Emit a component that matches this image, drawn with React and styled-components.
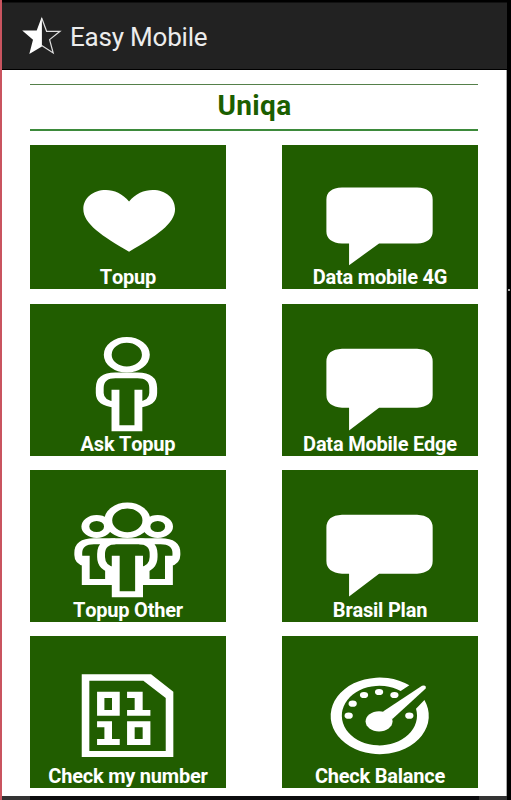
import styled, { createGlobalStyle } from 'styled-components'

const GlobalStyle = createGlobalStyle`
  * {
    box-sizing: border-box;
  }

  body {
    margin: 0;
    background: #000;
    font-family: Roboto, sans-serif;
  }
`

const Frame = styled.div`
  position: relative;
  display: flex;
  flex-direction: column;
  height: 800px;
  padding: 2px 4px 0 0;
  border-left: 2px solid #c9545f;
  background: #000;
  overflow: hidden;
`

const ActionBar = styled.header`
  display: flex;
  align-items: center;
  flex: none;
  height: 68px;
  padding-left: 19px;
  background: #222;
  border-top: 1px solid #111;
  border-bottom: 1px solid #000;
`

const StarIcon = styled.svg`
  width: 42px;
  height: 42px;
`

const AppName = styled.h1`
  margin: 2px 0 0 7px;
  color: #ececec;
  font-size: 26px;
  font-weight: 400;
  line-height: 32px;
  letter-spacing: -0.2px;
`

const Screen = styled.main`
  flex: none;
  height: 725.5px;
  padding: 14px 28px 0;
  background: #fff;
  border-right: 1px solid #aaa;
`

const Carrier = styled.h2`
  height: 47px;
  margin: 0 0 14px;
  padding-left: 1px;
  border-top: 1px solid #55804a;
  border-bottom: 2px solid #3d8a3b;
  color: #1b5e00;
  font-size: 28px;
  font-weight: 700;
  line-height: 41px;
  letter-spacing: 0.3px;
  text-align: center;
`

const Tiles = styled.div`
  display: grid;
  grid-template-columns: 196px 196px;
  grid-template-rows: 144.4px 152px 152px 152px;
  justify-content: space-between;
  row-gap: 14.3px;
`

const Tile = styled.button`
  display: grid;
  padding: 0;
  border: 0;
  background: #215d00;
  color: #fff;
  font-family: inherit;
  cursor: pointer;
`

/* Stretched with the tile, so the first row gets slightly flatter icons */
const TileIcon = styled.svg`
  grid-area: 1 / 1;
  width: 100%;
  height: 100%;
  min-height: 0;
`

const TileLabel = styled.span`
  grid-area: 1 / 1;
  align-self: end;
  font-size: 20px;
  font-weight: 700;
  font-kerning: none;
  line-height: 24px;
  letter-spacing: -0.22px;
  text-align: center;
`

const BottomBar = styled.footer`
  display: flex;
  justify-content: space-between;
  flex: 1;
  background: #0c0c0e;
`

const Corner = styled.div`
  width: 28px;
  background: #333;
`

const Speck = styled.i`
  position: absolute;
  top: 289px;
  right: 1px;
  width: 2px;
  height: 2px;
  background: #aaa;
`

const Heart = () => (
  <path
    fill="#fff"
    d="M74.3 59.5C69.5 51.5 63 47.5 57 47.5C47 47.5 40 56 40 67.5C40 83 54 96 74.3 112.3C94.6 96 108.8 83 108.8 67.5C108.8 56 102 47.5 92 47.5C85.6 47.5 79 51.5 74.3 59.5Z"
  />
)

const Bubble = () => (
  <path
    fill="#fff"
    d="M45 44.7H101.3Q113 45.5 113 57.5V91Q113 102.5 101.3 103.7H72.8L50.3 126.5V103.7H45Q33.3 102.5 33.3 91V57.5Q33.3 45.5 45 44.7Z"
  />
)

const Person = () => (
  <g fill="none" stroke="#fff" strokeWidth="5.9">
    <ellipse cx="72.6" cy="50.7" rx="14.3" ry="14.8" />
    <path d="M64.1 100.5Q52.3 99.5 52.3 89V84Q52.3 71.4 64 71.4H80.6Q92.4 71.4 92.4 84V89Q92.4 99.5 81.3 100.5" />
    <path d="M64.1 85.7V124.2H81.3V85.7" />
  </g>
)

const People = () => (
  <g fill="none" stroke="#fff" strokeWidth="5.9">
    <circle cx="50" cy="56.5" r="8.5" />
    <circle cx="95.8" cy="56.5" r="8.5" />
    <ellipse cx="73" cy="50.3" rx="14.3" ry="14.8" />
    <path d="M64.3 100.5Q53.3 99 53.3 87V84Q53.3 71.2 64.5 71.2H81.5Q92.7 71.2 92.7 84V87Q92.7 99 81.8 100.5" />
    <path d="M64.3 85.7V124.2H81.8V85.7" />
    <path d="M64 71.2H48Q36.2 71.2 36.2 83V85Q36.2 92 41.8 93.5M41.8 85.7V112H59.3V98" />
    <path d="M82 71.2H98Q109.8 71.2 109.8 83V85Q109.8 92 104.2 93.5M104.2 85.7V112H86.7V98" />
  </g>
)

const BinaryFile = () => (
  <g fill="#fff" fillRule="evenodd">
    <path d="M38.8 38.3H90.8L107.5 55.7V121H38.8ZM44.5 44.7V115H101.8V62L85 44.7Z" />
    <path d="M50.3 55.7H67.3V79.7H50.3ZM55.8 62V74H61.5V62Z" />
    <path d="M72.8 55.7H84.5V74H90.3V79.7H72.8V74H78.5V62H72.8Z" />
    <path d="M50.3 85.3H61.5V103H67.3V109H50.3V103H55.8V91.3H50.3Z" />
    <path d="M72.8 85.3H90.3V109H72.8ZM78.5 91.3V103H84.5V91.3Z" />
  </g>
)

const gaugeDots = [
  [50, 79.7],
  [53, 67.7],
  [61.5, 59],
  [72.8, 56],
  [84.3, 59],
  [95.5, 79.7],
]

const Gauge = () => (
  <g fill="#fff">
    <path d="M95.5 49.3A36.8 38.3 0 1 0 106.8 64L100.5 72.7A28.2 29.8 0 1 1 89 55Z" />
    {gaugeDots.map(([x, y]) => (
      <circle key={x} cx={x} cy={y} r="3.1" />
    ))}
    <circle cx="72.8" cy="85.3" r="10.1" />
    <path d="M75.8 75.5L105 49.8Q108.4 48.6 107.8 52.4L82.8 83Z" />
  </g>
)

const services = [
  { label: 'Topup', Icon: Heart },
  { label: 'Data mobile 4G', Icon: Bubble },
  { label: 'Ask Topup', Icon: Person },
  { label: 'Data Mobile Edge', Icon: Bubble },
  { label: 'Topup Other', Icon: People },
  { label: 'Brasil Plan', Icon: Bubble },
  { label: 'Check my number', Icon: BinaryFile },
  { label: 'Check Balance', Icon: Gauge },
]

const App = () => (
  <>
    <GlobalStyle />
    <Frame>
      <ActionBar>
        <StarIcon viewBox="21 16 42 42">
          <path
            fill="none"
            stroke="#ddd"
            strokeWidth="1.2"
            d="M41.7 19L46.6 32.3L60 32.3L49.6 40.6L53.2 54L41.7 46.6"
          />
          <path
            fill="#fff"
            d="M41.9 17.5L36.7 31.6L22.2 31.6L33 40.8L29.3 55L41.9 47.4Z"
          />
        </StarIcon>
        <AppName>Easy Mobile</AppName>
      </ActionBar>

      <Screen>
        <Carrier>Uniqa</Carrier>
        <Tiles>
          {services.map(({ label, Icon }) => (
            <Tile key={label}>
              <TileIcon viewBox="0 0 147 152" preserveAspectRatio="none">
                <Icon />
              </TileIcon>
              <TileLabel>{label}</TileLabel>
            </Tile>
          ))}
        </Tiles>
      </Screen>

      <BottomBar>
        <Corner />
        <Corner />
      </BottomBar>
      <Speck />
    </Frame>
  </>
)

export default App
